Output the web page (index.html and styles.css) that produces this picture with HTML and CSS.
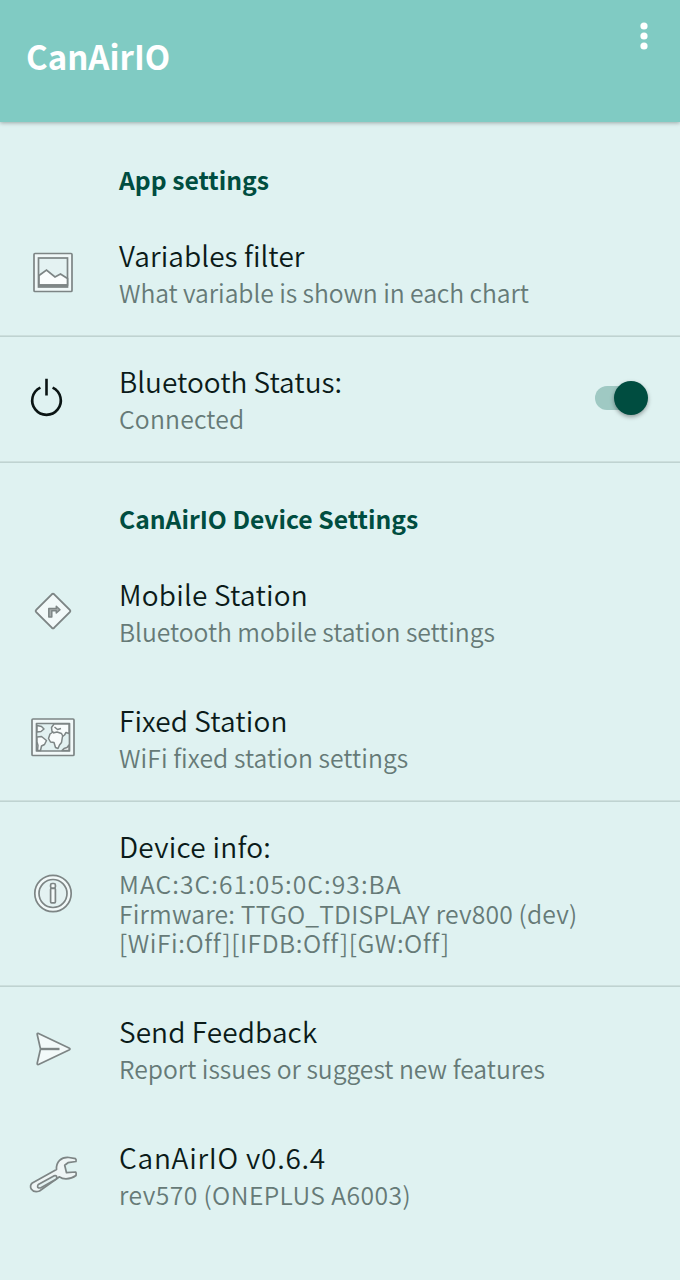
FILE: index.html
```html
<!DOCTYPE html>
<html lang="en">
<head>
<meta charset="utf-8">
<title>CanAirIO</title>
<link rel="stylesheet" href="styles.css">
</head>
<body>
<header class="bar">
  <h1 class="brand">CanAirIO</h1>
  <svg class="more" width="12" height="30" viewBox="0 0 12 30" fill="#fff"><circle cx="6" cy="5" r="3.6"/><circle cx="6" cy="15" r="3.6"/><circle cx="6" cy="25" r="3.6"/></svg>
</header>
<main>
  <section class="group">
    <h2 class="category">App settings</h2>
    <div class="row filter">
      <div class="icon"><svg width="50" height="50" viewBox="0 0 50 50" fill="none" stroke="#7d8585" stroke-width="1.7"><rect x="6" y="5.500" width="38" height="38" rx="1" fill="#f0f8f8"/><rect x="10.500" y="10" width="29" height="29" fill="#e4f2f2"/><path d="M11 27.500l7.500-5.500 8.500 7 5.500-3 7 4.500V37H11z" fill="#fafdfd"/><path d="M10.500 37.500h29" stroke-width="2.600"/></svg></div>
      <div class="text"><div class="title">Variables filter</div><div class="summary">What variable is shown in each chart</div></div>
    </div>
    <div class="row line bluetooth">
      <div class="icon"><svg width="50" height="50" viewBox="0 0 50 50" fill="none" stroke="#0b1514" stroke-width="2.600"><path d="M12.400 13.600a14.300 14.300 0 1 0 12.200 0M18.500 4.800v16.600"/></svg></div>
      <div class="text"><div class="title">Bluetooth Status:</div><div class="summary">Connected</div></div>
      <div class="switch"><div class="track"></div><div class="knob"></div></div>
    </div>
  </section>
  <section class="group line">
    <h2 class="category">CanAirIO Device Settings</h2>
    <div class="row mobile">
      <div class="icon"><svg width="50" height="50" viewBox="0 0 50 50" fill="none" stroke="#7d8585" stroke-width="1.900" stroke-linejoin="round"><path d="M23.800 7.300q1.200-1.100 2.400 0l15.600 15.500q1.100 1.200 0 2.400l-15.600 15.500q-1.200 1.100-2.400 0l-15.600-15.500q-1.100-1.200 0-2.400z" fill="#f2f9f9"/><path d="M20.800 30v-8.500h7.500v-2.300l3.700 3.500-3.700 3.300v-2.200h-4.500v6.200z" fill="#a4aaaa" stroke-width="1.500"/></svg></div>
      <div class="text"><div class="title">Mobile Station</div><div class="summary">Bluetooth mobile station settings</div></div>
    </div>
    <div class="row fixed">
      <div class="icon"><svg width="50" height="50" viewBox="0 0 50 50" fill="none" stroke="#7d8585" stroke-width="1.700" stroke-linejoin="round"><rect x="4" y="6" width="42" height="36.500" rx="1" fill="#f2f9f9"/><rect x="8.500" y="10.500" width="33" height="27.500" fill="#e2f1f1"/><g fill="#f8fcfc" stroke-width="1.500"><path d="M9 12.500l4.500 1 2.500 2.500-3 2.500-4 .5zM9 24l4.500-.5 5 4-2 4-3 1.500-1 4.500H9.500l.5-5L9 29z"/><path d="M24 18.500l-.5-4 2.500-3.500h15v9.500l-3-1-1.500 2.500-2 1.500-1 6-2 2.500-1.500 3.500-2.500-1-1.500-5-3.500-.5-2-3.500 1.500-4.500 3-2z"/><path d="M26.500 14l3 2.500 3.500-1M25 20l4-1 4.500 1.500 1.500 3" fill="none"/><path d="M34 37.500l2-2 3-1 2-2.500v5.500z"/></g></svg></div>
      <div class="text"><div class="title">Fixed Station</div><div class="summary">WiFi fixed station settings</div></div>
    </div>
  </section>
  <section class="group line">
    <div class="row device">
      <div class="icon"><svg width="50" height="50" viewBox="0 0 50 50" fill="none" stroke="#7d8585" stroke-width="1.700"><circle cx="25" cy="24.500" r="18.200" fill="#f2f9f9"/><circle cx="25" cy="24.500" r="14" fill="#e4f2f2"/><rect x="22.600" y="14.500" width="4.800" height="4.800" rx="1.500" fill="#f4fafa"/><rect x="22.600" y="19.300" width="4.800" height="14.500" rx="1" fill="#f4fafa"/></svg></div>
      <div class="text"><div class="title">Device info:</div><div class="summary"><div class="mac">MAC:3C:61:05:0C:93:BA</div><div class="firmware">Firmware: TTGO_TDISPLAY rev800 (dev)</div><div class="flags">[WiFi:Off][IFDB:Off][GW:Off]</div></div></div>
    </div>
  </section>
  <section class="group line">
    <div class="row feedback">
      <div class="icon"><svg width="50" height="50" viewBox="0 0 50 50" fill="none" stroke="#7d8585" stroke-width="1.700" stroke-linejoin="round"><path d="M10 9.300L41 24q2 1 0 2L10.500 40.500q-1.500.5-1.300-1.200L12.500 25 9.200 10.500Q9 9 10 9.300z" fill="#f2f9f9"/><path d="M12.500 25h19" stroke-width="2.400"/></svg></div>
      <div class="text"><div class="title">Send Feedback</div><div class="summary">Report issues or suggest new features</div></div>
    </div>
    <div class="row version">
      <div class="icon"><svg width="50" height="50" viewBox="0 0 50 50" fill="none" stroke="#7d8585" stroke-width="1.700" stroke-linejoin="round"><path d="M4.300 32.900L28.500 19.500C28 12 33 6.800 41 7.500L47.500 8.700q1 .7.500 2.800l-8 1.200-3.300 2.500 1.800 7.500 9-.7q1 .5.500 3.500-4 3-10 3.300-4 0-6.500-2L11.500 41Q6 43 3.200 39 1.500 35.500 4.300 32.900z" fill="#eef5f5"/><path d="M10.300 34.400l15.500-8.500q4-1 2.600 3L12.500 38q-4.500.2-2.200-3.600z" fill="#e2f1f1"/></svg></div>
      <div class="text"><div class="title">CanAirIO v0.6.4</div><div class="summary">rev570 (ONEPLUS A6003)</div></div>
    </div>
  </section>
</main>
</body>
</html>
```
FILE: styles.css
```css
* { box-sizing: border-box; }
body {
  margin: 0;
  min-height: 1280px;
  background: #dff2f1;
  color: #0b1b19;
  font-family: "Noto Sans CJK SC", "Noto Sans", sans-serif;
}
.bar {
  height: 122px;
  padding: 21px 30px 0 26px;
  display: flex;
  justify-content: space-between;
  background: #80cbc3;
  box-shadow: 0 1px 4px rgba(0, 0, 0, .3);
}
.brand { margin: 0; font-size: 33px; line-height: 71px; font-weight: 700; color: #fff; }
.group { display: flex; flex-direction: column; }
.category { margin: 0; height: 88px; padding: 13px 0 0 119px; font-size: 24.7px; line-height: 88px; font-weight: 700; color: #004d40; }
.group.line .category { height: 87px; padding-top: 12px; }
.row { display: flex; align-items: center; min-height: 126px; padding-right: 32px; }
.line { box-shadow: inset 0 1px #bfd3d1, 0 -1px #cddfdd; }
.icon { width: 91px; margin-left: 28px; display: flex; }
.text { flex: 1; padding: 25px 0 28px; }
.title { font-size: 28px; line-height: 40px; font-weight: 350; white-space: nowrap; }
.summary { margin-top: 3px; font-size: 24.7px; line-height: 29.7px; color: #667a77; font-weight: 350; white-space: nowrap; }

.filter .title { letter-spacing: .07px; }
.filter .summary { letter-spacing: -.07px; }
.bluetooth .summary { letter-spacing: .2px; }
.mobile .title { letter-spacing: .22px; }
.mobile .summary { letter-spacing: -.04px; }
.fixed .title { letter-spacing: .1px; }
.fixed .summary { letter-spacing: .08px; }
.device .title { letter-spacing: .25px; }
.feedback .title { letter-spacing: .1px; }
.version .title { letter-spacing: .75px; }
.version .summary { letter-spacing: .42px; }
.mac { letter-spacing: 1.05px; }
.firmware { letter-spacing: .18px; }
.flags { letter-spacing: .57px; }

.switch { display: flex; align-items: center; margin-bottom: 2px; }
.track { width: 43px; height: 24px; border-radius: 12px; background: #9fc9c3; }
.knob { width: 34px; height: 34px; margin-left: -24px; border-radius: 50%; background: #004d40; box-shadow: 0 2px 4px rgba(0, 0, 0, .35); }
```
